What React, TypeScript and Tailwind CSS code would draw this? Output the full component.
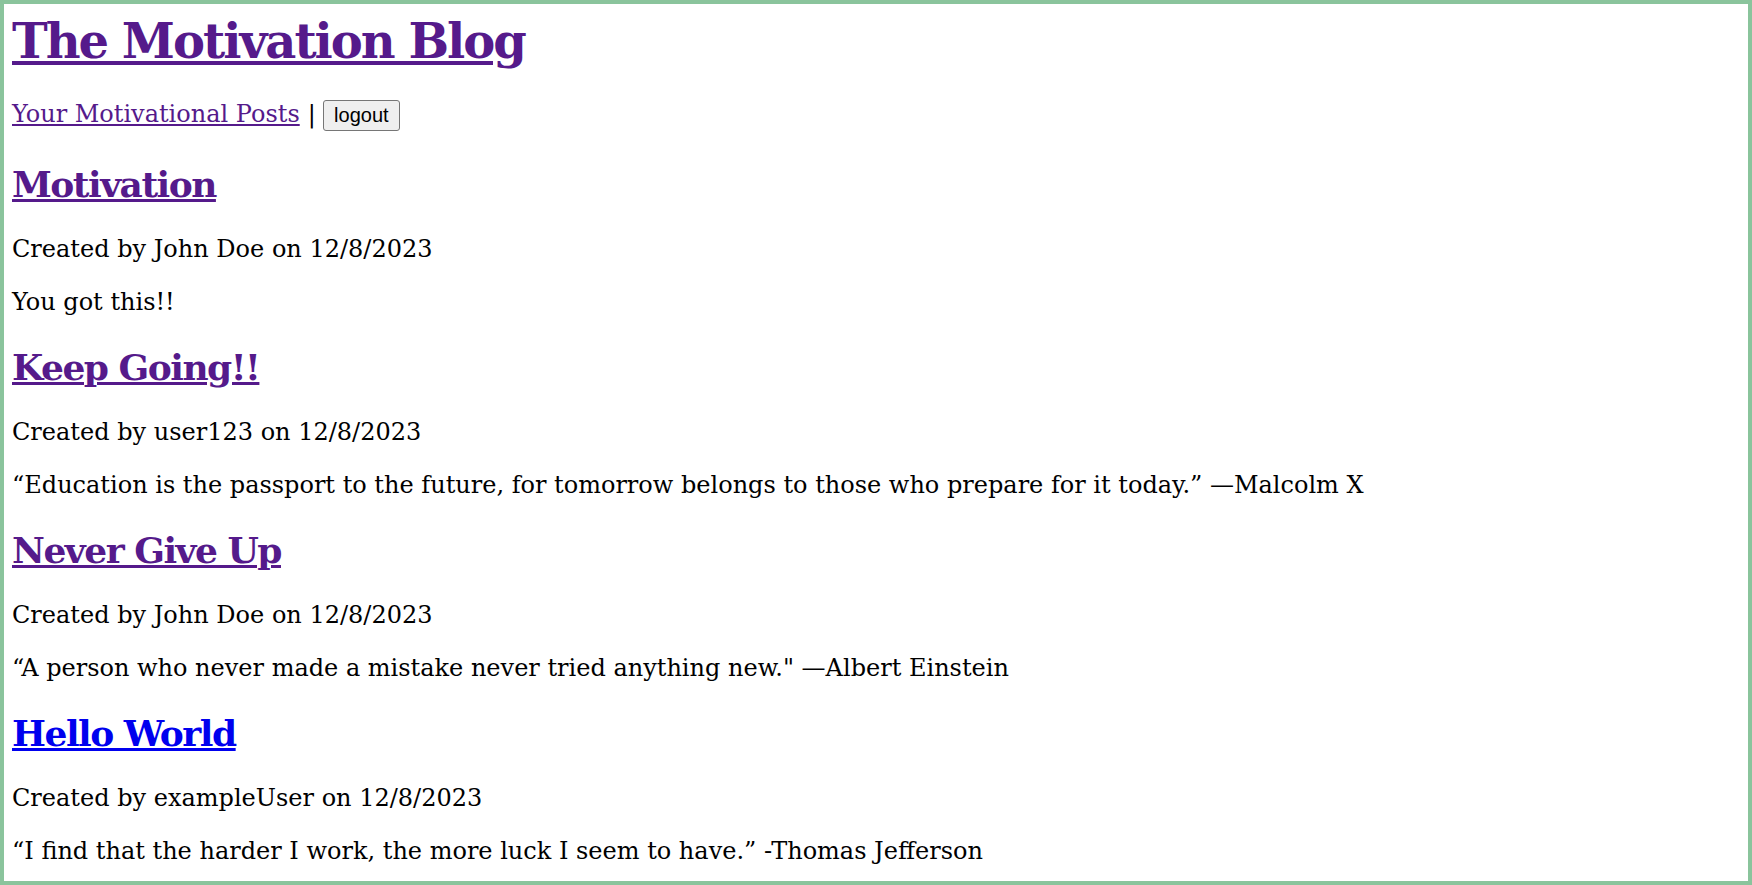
export default function App() {
  const posts = [
    { title: "Motivation", author: "John Doe", date: "12/8/2023", body: "You got this!!", visited: true },
    { title: "Keep Going!!", author: "user123", date: "12/8/2023", body: "“Education is the passport to the future, for tomorrow belongs to those who prepare for it today.” —Malcolm X", visited: true },
    { title: "Never Give Up", author: "John Doe", date: "12/8/2023", body: "“A person who never made a mistake never tried anything new.\" —Albert Einstein", visited: true },
    { title: "Hello World", author: "exampleUser", date: "12/8/2023", body: "“I find that the harder I work, the more luck I seem to have.” -Thomas Jefferson", visited: false },
  ];

  return (
    <div
      className="h-[885px] overflow-hidden border-4 border-[#8ac49c] bg-white px-2 text-black"
      style={{ fontFamily: '"DejaVu Serif", "Liberation Serif", serif' }}
    >
      <h1 className="mt-[9px] text-[48px] leading-[56px] font-bold tracking-[-2px]">
        <a href="#" className="text-[#551a8b] underline">The Motivation Blog</a>
      </h1>
      <nav className="mt-[30px] flex items-center text-[24px] leading-[32px]">
        <a href="#" className="-translate-y-px text-[#551a8b] underline">Your Motivational Posts</a>
        <span className="ml-[8px] -translate-y-px">|</span>
        <button
          className="ml-[7px] h-[31px] w-[77px] rounded-[3px] border border-[#767676] bg-[#efefef] text-[20px] leading-none text-black"
          style={{ fontFamily: '"Liberation Sans", Arial, sans-serif' }}
        >
          logout
        </button>
      </nav>
      {posts.map((post, i) => (
        <article key={post.title} className={i === 0 ? "mt-[31px]" : "mt-[28px]"}>
          <h2 className="text-[36px] leading-[44px] font-bold tracking-[-1.5px]">
            <a href="#" className={post.visited ? "text-[#551a8b] underline" : "text-[#0000ee] underline"}>
              {post.title}
            </a>
          </h2>
          <p className="mt-[29px] text-[24px] leading-[29px]">
            Created by {post.author} on {post.date}
          </p>
          <p className="mt-[24px] text-[24px] leading-[29px]">{post.body}</p>
        </article>
      ))}
    </div>
  );
}
